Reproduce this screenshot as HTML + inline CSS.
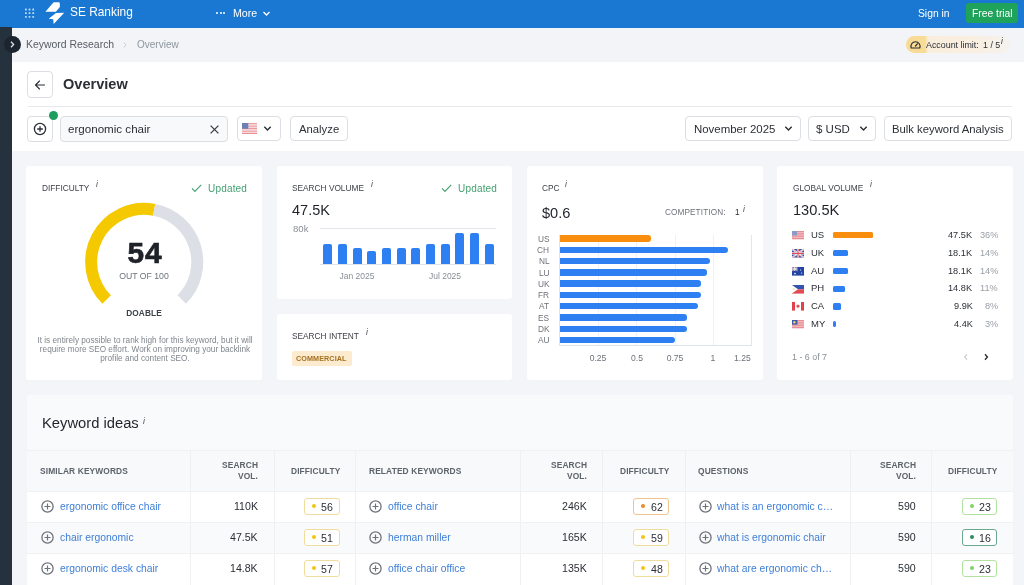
<!DOCTYPE html>
<html><head><meta charset="utf-8"><style>
html,body{margin:0;padding:0;}
body{width:1024px;height:585px;overflow:hidden;position:relative;background:#f3f5f8;font-family:"Liberation Sans",sans-serif;}
.a{position:absolute;}
.t{position:absolute;line-height:1;white-space:nowrap;will-change:transform;}
svg.a{overflow:visible}
</style></head><body>
<div class="a" style="left:0.00px;top:0.00px;width:1024.00px;height:27.70px;background:#1a78d2"></div>
<svg class="a" style="left:0;top:0" width="40" height="27" viewBox="0 0 40 27"><rect x="25.00" y="8.60" width="1.8" height="1.8" rx="0.4" fill="#c4dcf8"/><rect x="25.00" y="12.30" width="1.8" height="1.8" rx="0.4" fill="#c4dcf8"/><rect x="25.00" y="15.90" width="1.8" height="1.8" rx="0.4" fill="#c4dcf8"/><rect x="28.60" y="8.60" width="1.8" height="1.8" rx="0.4" fill="#c4dcf8"/><rect x="28.60" y="12.30" width="1.8" height="1.8" rx="0.4" fill="#c4dcf8"/><rect x="28.60" y="15.90" width="1.8" height="1.8" rx="0.4" fill="#c4dcf8"/><rect x="32.30" y="8.60" width="1.8" height="1.8" rx="0.4" fill="#c4dcf8"/><rect x="32.30" y="12.30" width="1.8" height="1.8" rx="0.4" fill="#c4dcf8"/><rect x="32.30" y="15.90" width="1.8" height="1.8" rx="0.4" fill="#c4dcf8"/></svg>
<svg class="a" style="left:0;top:0" width="80" height="27" viewBox="0 0 80 27"><path d="M45.4 11.7 L53.4 2.6 Q53.8 2.2 54.4 2.2 L58.6 2.2 Q59.8 2.2 59.8 3.4 L59.9 6.2 Q59.9 6.9 59.4 7.5 L55.9 11.7 Z" fill="#fff"/><path d="M48.8 18.8 L55.6 13.2 Q56 12.9 56.5 12.9 L64.2 12.8 L53.7 23.9 L53.2 19.3 Z" fill="#fff"/></svg>
<div class="t" style="top:7.43px;font-size:11.9px;color:#fff;left:70.40px;">SE Ranking</div>
<div class="a" style="left:216.00px;top:12.30px;width:2.00px;height:2.00px;background:#fff;border-radius:50%"></div>
<div class="a" style="left:219.60px;top:12.30px;width:2.00px;height:2.00px;background:#fff;border-radius:50%"></div>
<div class="a" style="left:223.20px;top:12.30px;width:2.00px;height:2.00px;background:#fff;border-radius:50%"></div>
<div class="t" style="top:7.93px;font-size:10.6px;color:#fff;left:232.50px;">More</div>
<svg class="a" style="left:262px;top:10px" width="9" height="7" viewBox="0 0 9 7"><path d="M1.5 2 L4.5 5 L7.5 2" stroke="#fff" stroke-width="1.3" fill="none"/></svg>
<div class="t" style="top:8.98px;font-size:10.3px;color:#fff;left:917.70px;">Sign in</div>
<div class="a" style="left:966.00px;top:3.30px;width:52.30px;height:20.10px;background:#1fa35b;border-radius:3px"></div>
<div class="t" style="top:9.18px;font-size:10.3px;color:#fff;left:972.40px;">Free trial</div>
<div class="a" style="left:0.00px;top:27.00px;width:12.00px;height:558.00px;background:#25313d"></div>
<div class="a" style="left:12.00px;top:27.70px;width:1012.00px;height:33.80px;background:#f2f4f8"></div>
<div class="t" style="top:39.95px;font-size:10.45px;color:#565c64;left:25.90px;">Keyword Research</div>
<svg class="a" style="left:122px;top:41px" width="6" height="8" viewBox="0 0 6 8"><path d="M1.8 1.5 L4 4 L1.8 6.5" stroke="#c5c9cf" stroke-width="0.9" fill="none"/></svg>
<div class="t" style="top:40.33px;font-size:10.0px;color:#90969e;left:137.40px;">Overview</div>
<div class="a" style="left:3.80px;top:36.00px;width:17.00px;height:17.00px;background:#1c252f;border-radius:50%"></div>
<svg class="a" style="left:8px;top:40px" width="9" height="9" viewBox="0 0 9 9"><path d="M3 1.8 L5.6 4.5 L3 7.2" stroke="#dfe3e8" stroke-width="1.3" fill="none"/></svg>
<div class="a" style="left:906.00px;top:36.30px;width:104.00px;height:17.20px;background:linear-gradient(90deg,#f8db94 0px,#f8db94 19px,#f9eedc 22px,#f9efe2 70px,#f5f2ee 100%);border-radius:9px"></div>
<svg class="a" style="left:909px;top:39px" width="13" height="12" viewBox="0 0 13 12"><path d="M2.2 9 A4.6 4.6 0 1 1 10.8 9 Z" stroke="#2b2f36" stroke-width="1.2" fill="none" stroke-linejoin="round"/><path d="M6.5 7 L8.4 4.8" stroke="#2b2f36" stroke-width="1.2" stroke-linecap="round"/></svg>
<div class="t" style="top:40.87px;font-size:8.9px;color:#2b2f36;left:926.30px;">Account limit:</div>
<div class="t" style="top:40.87px;font-size:8.9px;color:#2b2f36;left:982.80px;">1 / 5</div>
<div class="t" style="top:37.19px;font-size:8.4px;color:#2b2f36;left:1001.20px;"><i>i</i></div>
<div class="a" style="left:12.00px;top:61.50px;width:1012.00px;height:89.00px;background:#fff"></div>
<div class="a" style="left:27.00px;top:71.20px;width:25.50px;height:26.60px;background:#fff;border:1px solid #dbdee3;border-radius:4px;box-sizing:border-box"></div>
<svg class="a" style="left:33px;top:77.6px" width="14" height="14" viewBox="0 0 14 14"><path d="M11.5 7 H2.8 M6.5 3 L2.5 7 L6.5 11" stroke="#2b2f36" stroke-width="1.1" fill="none" stroke-linecap="round" stroke-linejoin="round"/></svg>
<div class="t" style="top:77.28px;font-size:14.55px;color:#2b2f36;font-weight:700;left:62.50px;">Overview</div>
<div class="a" style="left:28.00px;top:105.60px;width:984.00px;height:1.00px;background:#e6e8eb"></div>
<div class="a" style="left:27.30px;top:115.50px;width:25.30px;height:26.00px;background:#fff;border:1px solid #dbdee3;border-radius:4px;box-sizing:border-box"></div>
<svg class="a" style="left:33px;top:121.5px" width="14" height="14" viewBox="0 0 14 14"><circle cx="7" cy="7" r="5.6" stroke="#2b2f36" stroke-width="1.3" fill="none"/><path d="M7 4.2 V9.8 M4.2 7 H9.8" stroke="#2b2f36" stroke-width="1.3"/></svg>
<div class="a" style="left:48.90px;top:110.90px;width:9.20px;height:9.20px;background:#1c9f5e;border-radius:50%"></div>
<div class="a" style="left:59.50px;top:115.50px;width:168.00px;height:26.00px;background:#f8f9fa;border:1px solid #dbdee3;border-radius:4px;box-sizing:border-box"></div>
<div class="t" style="top:122.68px;font-size:11.6px;color:#2b2f36;left:68.20px;">ergonomic chair</div>
<svg class="a" style="left:208px;top:123px" width="13" height="13" viewBox="0 0 13 13"><path d="M2.6 2.6 L10.4 10.4 M10.4 2.6 L2.6 10.4" stroke="#3a3f46" stroke-width="1.3"/></svg>
<div class="a" style="left:237.10px;top:115.60px;width:43.50px;height:25.80px;background:#fff;border:1px solid #dbdee3;border-radius:4px;box-sizing:border-box"></div>
<svg class="a" style="left:242.4px;top:123.4px;opacity:1" width="15" height="10.8" viewBox="0 0 19 13" preserveAspectRatio="none"><rect x="0" y="0.00" width="19" height="1.00" fill="#e8737a"/><rect x="0" y="2.00" width="19" height="1.00" fill="#e8737a"/><rect x="0" y="4.00" width="19" height="1.00" fill="#e8737a"/><rect x="0" y="6.00" width="19" height="1.00" fill="#e8737a"/><rect x="0" y="8.00" width="19" height="1.00" fill="#e8737a"/><rect x="0" y="10.00" width="19" height="1.00" fill="#e8737a"/><rect x="0" y="12.00" width="19" height="1.00" fill="#e8737a"/><rect x="0" y="1" width="19" height="1" fill="#f7dcdc"/><rect x="0" y="1.00" width="19" height="1" fill="#f5d5d7"/><rect x="0" y="3.00" width="19" height="1" fill="#f5d5d7"/><rect x="0" y="5.00" width="19" height="1" fill="#f5d5d7"/><rect x="0" y="7.00" width="19" height="1" fill="#f5d5d7"/><rect x="0" y="9.00" width="19" height="1" fill="#f5d5d7"/><rect x="0" y="11.00" width="19" height="1" fill="#f5d5d7"/><rect x="0" y="0" width="8" height="7" fill="#6b7fb8"/></svg>
<svg class="a" style="left:263px;top:124.5px" width="9" height="7" viewBox="0 0 9 7"><path d="M1.3 1.8 L4.5 5 L7.7 1.8" stroke="#2b2f36" stroke-width="1.4" fill="none"/></svg>
<div class="a" style="left:290.30px;top:115.60px;width:57.70px;height:25.80px;background:#fff;border:1px solid #dbdee3;border-radius:4px;box-sizing:border-box"></div>
<div class="t" style="top:123.63px;font-size:11.3px;color:#2b2f36;left:298.60px;">Analyze</div>
<div class="a" style="left:684.90px;top:115.60px;width:116.60px;height:25.80px;background:#fff;border:1px solid #dbdee3;border-radius:4px;box-sizing:border-box"></div>
<div class="t" style="top:124.21px;font-size:11.45px;color:#2b2f36;left:693.50px;">November 2025</div>
<svg class="a" style="left:784px;top:124.5px" width="9" height="7" viewBox="0 0 9 7"><path d="M1.3 1.8 L4.5 5 L7.7 1.8" stroke="#2b2f36" stroke-width="1.4" fill="none"/></svg>
<div class="a" style="left:808.10px;top:115.60px;width:68.20px;height:25.80px;background:#fff;border:1px solid #dbdee3;border-radius:4px;box-sizing:border-box"></div>
<div class="t" style="top:124.17px;font-size:11.5px;color:#2b2f36;left:816.20px;">$ USD</div>
<svg class="a" style="left:859px;top:124.5px" width="9" height="7" viewBox="0 0 9 7"><path d="M1.3 1.8 L4.5 5 L7.7 1.8" stroke="#2b2f36" stroke-width="1.4" fill="none"/></svg>
<div class="a" style="left:883.60px;top:115.60px;width:128.70px;height:25.80px;background:#fff;border:1px solid #dbdee3;border-radius:4px;box-sizing:border-box"></div>
<div class="t" style="top:123.63px;font-size:11.3px;color:#2b2f36;left:891.90px;">Bulk keyword Analysis</div>
<div class="a" style="left:25.80px;top:165.70px;width:236.20px;height:214.10px;background:#fff;border-radius:3px"></div>
<div class="a" style="left:277.10px;top:165.70px;width:234.70px;height:133.80px;background:#fff;border-radius:3px"></div>
<div class="a" style="left:277.10px;top:313.90px;width:234.70px;height:65.90px;background:#fff;border-radius:3px"></div>
<div class="a" style="left:527.30px;top:165.70px;width:235.60px;height:214.10px;background:#fff;border-radius:3px"></div>
<div class="a" style="left:777.30px;top:165.70px;width:235.30px;height:214.10px;background:#fff;border-radius:3px"></div>
<div class="t" style="top:183.77px;font-size:8.3px;color:#3d4148;left:41.50px;">DIFFICULTY</div>
<div class="t" style="top:180.22px;font-size:8.6px;color:#4a4e55;left:96.40px;"><i>i</i></div>
<svg class="a" style="left:191px;top:183.9px" width="11" height="9" viewBox="0 0 11 9"><path d="M1 4.4 L3.9 7.4 L10.2 0.9" stroke="#44a070" stroke-width="1.1" fill="none"/></svg>
<div class="t" style="top:183.94px;font-size:10.0px;color:#44a070;letter-spacing:0.18px;left:207.60px;">Updated</div>
<svg class="a" style="left:0;top:0" width="262" height="380" viewBox="0 0 262 380"><path d="M106.65 299.55 A53.1 53.1 0 0 1 154.15 209.84" stroke="#f5c900" stroke-width="12" fill="none"/><path d="M154.15 209.84 A53.1 53.1 0 0 1 181.75 299.55" stroke="#dcdfe5" stroke-width="12" fill="none"/></svg>
<div class="t" style="top:238.37px;font-size:29.8px;color:#1f2329;font-weight:700;letter-spacing:1.0px;left:-155.40px;width:600px;text-align:center;-webkit-text-stroke:0.7px #1f2329;">54</div>
<div class="t" style="top:271.54px;font-size:8.7px;color:#6d727a;left:-155.80px;width:600px;text-align:center;">OUT OF 100</div>
<div class="t" style="top:308.57px;font-size:8.3px;color:#3d4148;font-weight:700;letter-spacing:0.1px;left:-155.80px;width:600px;text-align:center;">DOABLE</div>
<div class="t" style="top:337.04px;font-size:8.22px;color:#80868d;left:-155.40px;width:600px;text-align:center;">It is entirely possible to rank high for this keyword, but it will</div>
<div class="t" style="top:346.14px;font-size:8.22px;color:#80868d;left:-155.40px;width:600px;text-align:center;">require more SEO effort. Work on improving your backlink</div>
<div class="t" style="top:355.24px;font-size:8.22px;color:#80868d;left:-155.40px;width:600px;text-align:center;">profile and content SEO.</div>
<div class="t" style="top:183.87px;font-size:8.3px;color:#3d4148;left:291.70px;">SEARCH VOLUME</div>
<div class="t" style="top:180.22px;font-size:8.6px;color:#4a4e55;left:371.40px;"><i>i</i></div>
<svg class="a" style="left:441px;top:183.9px" width="11" height="9" viewBox="0 0 11 9"><path d="M1 4.4 L3.9 7.4 L10.2 0.9" stroke="#44a070" stroke-width="1.1" fill="none"/></svg>
<div class="t" style="top:183.94px;font-size:10.0px;color:#44a070;letter-spacing:0.18px;left:457.60px;">Updated</div>
<div class="t" style="top:203.23px;font-size:14.5px;color:#1f2329;left:291.80px;">47.5K</div>
<div class="t" style="top:224.47px;font-size:9.6px;color:#8a8f96;left:292.60px;">80k</div>
<div class="a" style="left:320.00px;top:228.30px;width:176.30px;height:0.80px;background:#e3e6ea"></div>
<div class="a" style="left:320.00px;top:264.20px;width:176.30px;height:0.80px;background:#dfe3ea"></div>
<div class="a" style="left:323.10px;top:244.30px;width:9.00px;height:20.10px;background:#2d7ff2;border-radius:2px 2px 0 0"></div>
<div class="a" style="left:337.80px;top:244.30px;width:9.00px;height:20.10px;background:#2d7ff2;border-radius:2px 2px 0 0"></div>
<div class="a" style="left:352.50px;top:248.00px;width:9.00px;height:16.40px;background:#2d7ff2;border-radius:2px 2px 0 0"></div>
<div class="a" style="left:367.20px;top:251.00px;width:9.00px;height:13.40px;background:#2d7ff2;border-radius:2px 2px 0 0"></div>
<div class="a" style="left:381.90px;top:248.00px;width:9.00px;height:16.40px;background:#2d7ff2;border-radius:2px 2px 0 0"></div>
<div class="a" style="left:396.60px;top:248.00px;width:9.00px;height:16.40px;background:#2d7ff2;border-radius:2px 2px 0 0"></div>
<div class="a" style="left:411.30px;top:248.00px;width:9.00px;height:16.40px;background:#2d7ff2;border-radius:2px 2px 0 0"></div>
<div class="a" style="left:426.00px;top:244.30px;width:9.00px;height:20.10px;background:#2d7ff2;border-radius:2px 2px 0 0"></div>
<div class="a" style="left:440.70px;top:244.30px;width:9.00px;height:20.10px;background:#2d7ff2;border-radius:2px 2px 0 0"></div>
<div class="a" style="left:455.40px;top:233.20px;width:9.00px;height:31.20px;background:#2d7ff2;border-radius:2px 2px 0 0"></div>
<div class="a" style="left:470.10px;top:233.20px;width:9.00px;height:31.20px;background:#2d7ff2;border-radius:2px 2px 0 0"></div>
<div class="a" style="left:484.80px;top:244.30px;width:9.00px;height:20.10px;background:#2d7ff2;border-radius:2px 2px 0 0"></div>
<div class="t" style="top:271.90px;font-size:8.5px;color:#8a8f96;left:57.40px;width:600px;text-align:center;">Jan 2025</div>
<div class="t" style="top:271.90px;font-size:8.5px;color:#8a8f96;left:144.90px;width:600px;text-align:center;">Jul 2025</div>
<div class="t" style="top:331.97px;font-size:8.3px;color:#3d4148;left:291.70px;">SEARCH INTENT</div>
<div class="t" style="top:328.22px;font-size:8.6px;color:#4a4e55;left:365.90px;"><i>i</i></div>
<div class="a" style="left:292.00px;top:351.30px;width:59.80px;height:14.30px;background:#fdebcf;border-radius:2px"></div>
<div class="t" style="top:355.31px;font-size:7.2px;color:#a4701f;font-weight:700;letter-spacing:0.1px;left:296.40px;">COMMERCIAL</div>
<div class="t" style="top:183.87px;font-size:8.3px;color:#3d4148;left:541.60px;">CPC</div>
<div class="t" style="top:180.22px;font-size:8.6px;color:#4a4e55;left:565.40px;"><i>i</i></div>
<div class="t" style="top:205.84px;font-size:14.6px;color:#1f2329;left:542.00px;">$0.6</div>
<div class="t" style="top:208.76px;font-size:8.2px;color:#6d727a;letter-spacing:0.12px;left:664.90px;">COMPETITION:</div>
<div class="t" style="top:208.47px;font-size:8.3px;color:#2b2f36;left:734.50px;">1</div>
<div class="t" style="top:204.72px;font-size:8.6px;color:#4a4e55;left:743.20px;"><i>i</i></div>
<div class="a" style="left:597.96px;top:234.50px;width:0.80px;height:111.00px;background:#f0f1f4"></div>
<div class="a" style="left:636.32px;top:234.50px;width:0.80px;height:111.00px;background:#f0f1f4"></div>
<div class="a" style="left:674.68px;top:234.50px;width:0.80px;height:111.00px;background:#f0f1f4"></div>
<div class="a" style="left:713.04px;top:234.50px;width:0.80px;height:111.00px;background:#f0f1f4"></div>
<div class="a" style="left:751.00px;top:234.50px;width:0.80px;height:111.00px;background:#e3e6ea"></div>
<div class="a" style="left:558.80px;top:234.50px;width:0.80px;height:111.50px;background:#dfe3ea"></div>
<div class="a" style="left:559.60px;top:345.20px;width:192.00px;height:0.80px;background:#dfe3ea"></div>
<div class="a" style="left:559.60px;top:235.20px;width:90.99px;height:6.40px;background:#f98d0e;border-radius:0 3px 3px 0"></div>
<div class="t" style="top:234.57px;font-size:8.3px;color:#6d727a;right:474.70px;">US</div>
<div class="a" style="left:559.60px;top:246.51px;width:168.78px;height:6.40px;background:#2d7ff2;border-radius:0 3px 3px 0"></div>
<div class="t" style="top:245.88px;font-size:8.3px;color:#6d727a;right:474.70px;">CH</div>
<div class="a" style="left:559.60px;top:257.82px;width:150.37px;height:6.40px;background:#2d7ff2;border-radius:0 3px 3px 0"></div>
<div class="t" style="top:257.19px;font-size:8.3px;color:#6d727a;right:474.70px;">NL</div>
<div class="a" style="left:559.60px;top:269.13px;width:147.30px;height:6.40px;background:#2d7ff2;border-radius:0 3px 3px 0"></div>
<div class="t" style="top:268.50px;font-size:8.3px;color:#6d727a;right:474.70px;">LU</div>
<div class="a" style="left:559.60px;top:280.44px;width:141.47px;height:6.40px;background:#2d7ff2;border-radius:0 3px 3px 0"></div>
<div class="t" style="top:279.81px;font-size:8.3px;color:#6d727a;right:474.70px;">UK</div>
<div class="a" style="left:559.60px;top:291.75px;width:141.47px;height:6.40px;background:#2d7ff2;border-radius:0 3px 3px 0"></div>
<div class="t" style="top:291.12px;font-size:8.3px;color:#6d727a;right:474.70px;">FR</div>
<div class="a" style="left:559.60px;top:303.06px;width:138.86px;height:6.40px;background:#2d7ff2;border-radius:0 3px 3px 0"></div>
<div class="t" style="top:302.43px;font-size:8.3px;color:#6d727a;right:474.70px;">AT</div>
<div class="a" style="left:559.60px;top:314.37px;width:127.66px;height:6.40px;background:#2d7ff2;border-radius:0 3px 3px 0"></div>
<div class="t" style="top:313.74px;font-size:8.3px;color:#6d727a;right:474.70px;">ES</div>
<div class="a" style="left:559.60px;top:325.68px;width:127.66px;height:6.40px;background:#2d7ff2;border-radius:0 3px 3px 0"></div>
<div class="t" style="top:325.05px;font-size:8.3px;color:#6d727a;right:474.70px;">DK</div>
<div class="a" style="left:559.60px;top:336.99px;width:115.54px;height:6.40px;background:#2d7ff2;border-radius:0 3px 3px 0"></div>
<div class="t" style="top:336.36px;font-size:8.3px;color:#6d727a;right:474.70px;">AU</div>
<div class="t" style="top:353.62px;font-size:8.6px;color:#6d727a;left:298.16px;width:600px;text-align:center;">0.25</div>
<div class="t" style="top:353.62px;font-size:8.6px;color:#6d727a;left:336.52px;width:600px;text-align:center;">0.5</div>
<div class="t" style="top:353.62px;font-size:8.6px;color:#6d727a;left:374.88px;width:600px;text-align:center;">0.75</div>
<div class="t" style="top:353.62px;font-size:8.6px;color:#6d727a;left:413.24px;width:600px;text-align:center;">1</div>
<div class="t" style="top:353.62px;font-size:8.6px;color:#6d727a;right:273.70px;">1.25</div>
<div class="t" style="top:183.87px;font-size:8.3px;color:#3d4148;left:792.50px;">GLOBAL VOLUME</div>
<div class="t" style="top:180.22px;font-size:8.6px;color:#4a4e55;left:869.90px;"><i>i</i></div>
<div class="t" style="top:203.14px;font-size:14.6px;color:#1f2329;left:792.80px;">130.5K</div>
<svg class="a" style="left:792.3px;top:231.10px" width="12" height="8.6" viewBox="0 0 12 8.6"><rect width="12" height="8.6" rx="0.8" fill="#f1bcc1"/><rect y="0.00" width="12" height="1.1" fill="#e88b93"/><rect y="2.30" width="12" height="1.1" fill="#e88b93"/><rect y="4.60" width="12" height="1.1" fill="#e88b93"/><rect y="6.90" width="12" height="1.1" fill="#e88b93"/><rect width="5" height="4.4" fill="#8b9bc9"/></svg>
<div class="t" style="top:229.96px;font-size:9.5px;color:#2b2f36;left:811.40px;">US</div>
<div class="a" style="left:832.90px;top:232.00px;width:39.80px;height:6.30px;background:#f98d0e;border-radius:1.5px"></div>
<div class="t" style="top:230.91px;font-size:9.2px;color:#2b2f36;right:51.60px;">47.5K</div>
<div class="t" style="top:230.91px;font-size:9.2px;color:#9aa0a7;right:26.00px;">36%</div>
<svg class="a" style="left:792.3px;top:248.94px" width="12" height="8.6" viewBox="0 0 12 8.6"><rect width="12" height="8.6" fill="#3653a8"/><path d="M0 0 L12 8.6 M12 0 L0 8.6" stroke="#fff" stroke-width="1.6"/><path d="M0 0 L12 8.6 M12 0 L0 8.6" stroke="#d9505c" stroke-width="0.5"/><path d="M6 0 V8.6 M0 4.3 H12" stroke="#fff" stroke-width="2.2"/><path d="M6 0 V8.6 M0 4.3 H12" stroke="#d9505c" stroke-width="1.2"/></svg>
<div class="t" style="top:247.80px;font-size:9.5px;color:#2b2f36;left:811.40px;">UK</div>
<div class="a" style="left:832.90px;top:249.84px;width:15.20px;height:6.30px;background:#2d7ff2;border-radius:1.5px"></div>
<div class="t" style="top:248.75px;font-size:9.2px;color:#2b2f36;right:51.60px;">18.1K</div>
<div class="t" style="top:248.75px;font-size:9.2px;color:#9aa0a7;right:26.00px;">14%</div>
<svg class="a" style="left:792.3px;top:266.78px" width="12" height="8.6" viewBox="0 0 12 8.6"><rect width="12" height="8.6" fill="#2344a3"/><rect width="5.5" height="4" fill="#5a6fb5"/><path d="M0 0 L5.5 4 M5.5 0 L0 4" stroke="#f0b0b8" stroke-width="0.8"/><path d="M2.75 0 V4 M0 2 H5.5" stroke="#f5f0f2" stroke-width="1"/><circle cx="8.6" cy="3" r="0.6" fill="#fff"/><circle cx="9.6" cy="6" r="0.6" fill="#fff"/><circle cx="3" cy="6.6" r="0.8" fill="#fff"/></svg>
<div class="t" style="top:265.64px;font-size:9.5px;color:#2b2f36;left:811.40px;">AU</div>
<div class="a" style="left:832.90px;top:267.68px;width:15.20px;height:6.30px;background:#2d7ff2;border-radius:1.5px"></div>
<div class="t" style="top:266.59px;font-size:9.2px;color:#2b2f36;right:51.60px;">18.1K</div>
<div class="t" style="top:266.59px;font-size:9.2px;color:#9aa0a7;right:26.00px;">14%</div>
<svg class="a" style="left:792.3px;top:284.62px" width="12" height="8.6" viewBox="0 0 12 8.6"><rect width="12" height="4.3" fill="#3354b0"/><rect y="4.3" width="12" height="4.3" fill="#e24a55"/><path d="M0 0 L6 4.3 L0 8.6 Z" fill="#fff"/><circle cx="2" cy="4.3" r="0.8" fill="#f2d070"/></svg>
<div class="t" style="top:283.48px;font-size:9.5px;color:#2b2f36;left:811.40px;">PH</div>
<div class="a" style="left:832.90px;top:285.52px;width:12.30px;height:6.30px;background:#2d7ff2;border-radius:1.5px"></div>
<div class="t" style="top:284.43px;font-size:9.2px;color:#2b2f36;right:51.60px;">14.8K</div>
<div class="t" style="top:284.43px;font-size:9.2px;color:#9aa0a7;right:26.00px;">11%</div>
<svg class="a" style="left:792.3px;top:302.46px" width="12" height="8.6" viewBox="0 0 12 8.6"><rect width="12" height="8.6" fill="#fff"/><rect width="3" height="8.6" fill="#e2414a"/><rect x="9" width="3" height="8.6" fill="#e2414a"/><path d="M6 2 L6.8 3.6 L7.8 3.2 L7.3 5.3 L6.2 5.6 V6.6 H5.8 V5.6 L4.7 5.3 L4.2 3.2 L5.2 3.6 Z" fill="#e2414a"/></svg>
<div class="t" style="top:301.32px;font-size:9.5px;color:#2b2f36;left:811.40px;">CA</div>
<div class="a" style="left:832.90px;top:303.36px;width:8.20px;height:6.30px;background:#2d7ff2;border-radius:1.5px"></div>
<div class="t" style="top:302.27px;font-size:9.2px;color:#2b2f36;right:51.60px;">9.9K</div>
<div class="t" style="top:302.27px;font-size:9.2px;color:#9aa0a7;right:26.00px;">8%</div>
<svg class="a" style="left:792.3px;top:320.30px" width="12" height="8.6" viewBox="0 0 12 8.6"><rect width="12" height="8.6" rx="0.8" fill="#f1bcc1"/><rect y="0.00" width="12" height="1.1" fill="#e88b93"/><rect y="2.30" width="12" height="1.1" fill="#e88b93"/><rect y="4.60" width="12" height="1.1" fill="#e88b93"/><rect y="6.90" width="12" height="1.1" fill="#e88b93"/><rect width="5.4" height="4.6" fill="#3d5aa6"/><circle cx="2.4" cy="2.3" r="1.2" fill="#e9d27a"/></svg>
<div class="t" style="top:319.16px;font-size:9.5px;color:#2b2f36;left:811.40px;">MY</div>
<div class="a" style="left:832.90px;top:321.20px;width:3.50px;height:6.30px;background:#2d7ff2;border-radius:1.5px"></div>
<div class="t" style="top:320.11px;font-size:9.2px;color:#2b2f36;right:51.60px;">4.4K</div>
<div class="t" style="top:320.11px;font-size:9.2px;color:#9aa0a7;right:26.00px;">3%</div>
<div class="t" style="top:352.77px;font-size:8.9px;color:#8a8f96;left:792.30px;">1 - 6 of 7</div>
<svg class="a" style="left:961px;top:352px" width="10" height="10" viewBox="0 0 10 10"><path d="M6 2.3 L3.6 5 L6 7.7" stroke="#c9cdd2" stroke-width="1.2" fill="none"/></svg>
<svg class="a" style="left:980.7px;top:352px" width="10" height="10" viewBox="0 0 10 10"><path d="M4 2.3 L6.4 5 L4 7.7" stroke="#2b2f36" stroke-width="1.4" fill="none"/></svg>
<div class="a" style="left:26.80px;top:395.40px;width:986.00px;height:200.00px;background:#f9fafb;border-radius:3px"></div>
<div class="t" style="top:415.91px;font-size:14.75px;color:#1f2329;left:41.60px;">Keyword ideas</div>
<div class="t" style="top:416.92px;font-size:8.6px;color:#4a4e55;left:143.20px;"><i>i</i></div>
<div class="a" style="left:27.00px;top:450.50px;width:986.00px;height:40.30px;background:#f8f9fa"></div>
<div class="a" style="left:27.00px;top:490.80px;width:986.00px;height:31.00px;background:#fff"></div>
<div class="a" style="left:27.00px;top:521.80px;width:986.00px;height:31.00px;background:#f9fafb"></div>
<div class="a" style="left:27.00px;top:552.80px;width:986.00px;height:33.00px;background:#fff"></div>
<div class="a" style="left:190.40px;top:450.50px;width:0.80px;height:140.00px;background:#eef0f2"></div>
<div class="a" style="left:273.60px;top:450.50px;width:0.80px;height:140.00px;background:#eef0f2"></div>
<div class="a" style="left:355.40px;top:450.50px;width:0.80px;height:140.00px;background:#eef0f2"></div>
<div class="a" style="left:520.40px;top:450.50px;width:0.80px;height:140.00px;background:#eef0f2"></div>
<div class="a" style="left:602.20px;top:450.50px;width:0.80px;height:140.00px;background:#eef0f2"></div>
<div class="a" style="left:684.70px;top:450.50px;width:0.80px;height:140.00px;background:#eef0f2"></div>
<div class="a" style="left:849.70px;top:450.50px;width:0.80px;height:140.00px;background:#eef0f2"></div>
<div class="a" style="left:931.10px;top:450.50px;width:0.80px;height:140.00px;background:#eef0f2"></div>
<div class="a" style="left:27.00px;top:450.30px;width:986.00px;height:0.80px;background:#f0f1f3"></div>
<div class="a" style="left:27.00px;top:490.60px;width:986.00px;height:0.80px;background:#f0f1f3"></div>
<div class="a" style="left:27.00px;top:521.60px;width:986.00px;height:0.80px;background:#f0f1f3"></div>
<div class="a" style="left:27.00px;top:552.60px;width:986.00px;height:0.80px;background:#f0f1f3"></div>
<div class="t" style="top:466.89px;font-size:8.4px;color:#5d636b;font-weight:700;letter-spacing:0.12px;left:40.40px;">SIMILAR KEYWORDS</div>
<div class="t" style="top:460.59px;font-size:8.4px;color:#5d636b;font-weight:700;letter-spacing:0.12px;right:765.60px;">SEARCH</div>
<div class="t" style="top:472.49px;font-size:8.4px;color:#5d636b;font-weight:700;letter-spacing:0.12px;right:765.60px;">VOL.</div>
<div class="t" style="top:466.89px;font-size:8.4px;color:#5d636b;font-weight:700;letter-spacing:0.12px;right:683.80px;">DIFFICULTY</div>
<svg class="a" style="left:41.00px;top:499.90px" width="13" height="13" viewBox="0 0 13 13"><circle cx="6.5" cy="6.5" r="5.6" stroke="#6e737a" stroke-width="1.3" fill="none"/><path d="M6.5 3.5 V9.5 M3.5 6.5 H9.5" stroke="#6e737a" stroke-width="1.2"/></svg>
<div class="t" style="top:501.74px;font-size:10.35px;color:#3f7fd7;left:59.50px;">ergonomic office chair</div>
<div class="t" style="top:501.13px;font-size:10.6px;color:#2b2f36;right:766.00px;">110K</div>
<div class="a" style="left:304.00px;top:497.60px;width:35.60px;height:17.80px;background:#fff;border:1px solid #f0dc9c;border-radius:3px;box-sizing:border-box"></div>
<div class="a" style="left:312.00px;top:504.30px;width:4.20px;height:4.20px;background:#f4c414;border-radius:50%"></div>
<div class="t" style="top:501.53px;font-size:10.6px;color:#2b2f36;right:690.90px;">56</div>
<svg class="a" style="left:41.00px;top:530.90px" width="13" height="13" viewBox="0 0 13 13"><circle cx="6.5" cy="6.5" r="5.6" stroke="#6e737a" stroke-width="1.3" fill="none"/><path d="M6.5 3.5 V9.5 M3.5 6.5 H9.5" stroke="#6e737a" stroke-width="1.2"/></svg>
<div class="t" style="top:532.74px;font-size:10.35px;color:#3f7fd7;left:59.50px;">chair ergonomic</div>
<div class="t" style="top:532.13px;font-size:10.6px;color:#2b2f36;right:766.00px;">47.5K</div>
<div class="a" style="left:304.00px;top:528.60px;width:35.60px;height:17.80px;background:#fff;border:1px solid #f0dc9c;border-radius:3px;box-sizing:border-box"></div>
<div class="a" style="left:312.00px;top:535.30px;width:4.20px;height:4.20px;background:#f4c414;border-radius:50%"></div>
<div class="t" style="top:532.53px;font-size:10.6px;color:#2b2f36;right:690.90px;">51</div>
<svg class="a" style="left:41.00px;top:561.90px" width="13" height="13" viewBox="0 0 13 13"><circle cx="6.5" cy="6.5" r="5.6" stroke="#6e737a" stroke-width="1.3" fill="none"/><path d="M6.5 3.5 V9.5 M3.5 6.5 H9.5" stroke="#6e737a" stroke-width="1.2"/></svg>
<div class="t" style="top:563.74px;font-size:10.35px;color:#3f7fd7;left:59.50px;">ergonomic desk chair</div>
<div class="t" style="top:563.13px;font-size:10.6px;color:#2b2f36;right:766.00px;">14.8K</div>
<div class="a" style="left:304.00px;top:559.60px;width:35.60px;height:17.80px;background:#fff;border:1px solid #f0dc9c;border-radius:3px;box-sizing:border-box"></div>
<div class="a" style="left:312.00px;top:566.30px;width:4.20px;height:4.20px;background:#f4c414;border-radius:50%"></div>
<div class="t" style="top:563.53px;font-size:10.6px;color:#2b2f36;right:690.90px;">57</div>
<div class="t" style="top:466.89px;font-size:8.4px;color:#5d636b;font-weight:700;letter-spacing:0.12px;left:368.80px;">RELATED KEYWORDS</div>
<div class="t" style="top:460.59px;font-size:8.4px;color:#5d636b;font-weight:700;letter-spacing:0.12px;right:437.00px;">SEARCH</div>
<div class="t" style="top:472.49px;font-size:8.4px;color:#5d636b;font-weight:700;letter-spacing:0.12px;right:437.00px;">VOL.</div>
<div class="t" style="top:466.89px;font-size:8.4px;color:#5d636b;font-weight:700;letter-spacing:0.12px;right:354.50px;">DIFFICULTY</div>
<svg class="a" style="left:369.40px;top:499.90px" width="13" height="13" viewBox="0 0 13 13"><circle cx="6.5" cy="6.5" r="5.6" stroke="#6e737a" stroke-width="1.3" fill="none"/><path d="M6.5 3.5 V9.5 M3.5 6.5 H9.5" stroke="#6e737a" stroke-width="1.2"/></svg>
<div class="t" style="top:501.74px;font-size:10.35px;color:#3f7fd7;left:387.90px;">office chair</div>
<div class="t" style="top:501.13px;font-size:10.6px;color:#2b2f36;right:437.40px;">246K</div>
<div class="a" style="left:633.30px;top:497.60px;width:35.60px;height:17.80px;background:#fff;border:1px solid #f0c48e;border-radius:3px;box-sizing:border-box"></div>
<div class="a" style="left:641.30px;top:504.30px;width:4.20px;height:4.20px;background:#ee8a26;border-radius:50%"></div>
<div class="t" style="top:501.53px;font-size:10.6px;color:#2b2f36;right:361.60px;">62</div>
<svg class="a" style="left:369.40px;top:530.90px" width="13" height="13" viewBox="0 0 13 13"><circle cx="6.5" cy="6.5" r="5.6" stroke="#6e737a" stroke-width="1.3" fill="none"/><path d="M6.5 3.5 V9.5 M3.5 6.5 H9.5" stroke="#6e737a" stroke-width="1.2"/></svg>
<div class="t" style="top:532.74px;font-size:10.35px;color:#3f7fd7;left:387.90px;">herman miller</div>
<div class="t" style="top:532.13px;font-size:10.6px;color:#2b2f36;right:437.40px;">165K</div>
<div class="a" style="left:633.30px;top:528.60px;width:35.60px;height:17.80px;background:#fff;border:1px solid #f0dc9c;border-radius:3px;box-sizing:border-box"></div>
<div class="a" style="left:641.30px;top:535.30px;width:4.20px;height:4.20px;background:#f4c414;border-radius:50%"></div>
<div class="t" style="top:532.53px;font-size:10.6px;color:#2b2f36;right:361.60px;">59</div>
<svg class="a" style="left:369.40px;top:561.90px" width="13" height="13" viewBox="0 0 13 13"><circle cx="6.5" cy="6.5" r="5.6" stroke="#6e737a" stroke-width="1.3" fill="none"/><path d="M6.5 3.5 V9.5 M3.5 6.5 H9.5" stroke="#6e737a" stroke-width="1.2"/></svg>
<div class="t" style="top:563.74px;font-size:10.35px;color:#3f7fd7;left:387.90px;">office chair office</div>
<div class="t" style="top:563.13px;font-size:10.6px;color:#2b2f36;right:437.40px;">135K</div>
<div class="a" style="left:633.30px;top:559.60px;width:35.60px;height:17.80px;background:#fff;border:1px solid #f0dc9c;border-radius:3px;box-sizing:border-box"></div>
<div class="a" style="left:641.30px;top:566.30px;width:4.20px;height:4.20px;background:#f4c414;border-radius:50%"></div>
<div class="t" style="top:563.53px;font-size:10.6px;color:#2b2f36;right:361.60px;">48</div>
<div class="t" style="top:466.89px;font-size:8.4px;color:#5d636b;font-weight:700;letter-spacing:0.12px;left:698.10px;">QUESTIONS</div>
<div class="t" style="top:460.59px;font-size:8.4px;color:#5d636b;font-weight:700;letter-spacing:0.12px;right:108.10px;">SEARCH</div>
<div class="t" style="top:472.49px;font-size:8.4px;color:#5d636b;font-weight:700;letter-spacing:0.12px;right:108.10px;">VOL.</div>
<div class="t" style="top:466.89px;font-size:8.4px;color:#5d636b;font-weight:700;letter-spacing:0.12px;right:26.20px;">DIFFICULTY</div>
<svg class="a" style="left:698.70px;top:499.90px" width="13" height="13" viewBox="0 0 13 13"><circle cx="6.5" cy="6.5" r="5.6" stroke="#6e737a" stroke-width="1.3" fill="none"/><path d="M6.5 3.5 V9.5 M3.5 6.5 H9.5" stroke="#6e737a" stroke-width="1.2"/></svg>
<div class="t" style="top:501.74px;font-size:10.35px;color:#3f7fd7;left:717.20px;">what is an ergonomic c…</div>
<div class="t" style="top:501.13px;font-size:10.6px;color:#2b2f36;right:108.50px;">590</div>
<div class="a" style="left:961.60px;top:497.60px;width:35.60px;height:17.80px;background:#fff;border:1px solid #b2e2a0;border-radius:3px;box-sizing:border-box"></div>
<div class="a" style="left:969.60px;top:504.30px;width:4.20px;height:4.20px;background:#82d16a;border-radius:50%"></div>
<div class="t" style="top:501.53px;font-size:10.6px;color:#2b2f36;right:33.30px;">23</div>
<svg class="a" style="left:698.70px;top:530.90px" width="13" height="13" viewBox="0 0 13 13"><circle cx="6.5" cy="6.5" r="5.6" stroke="#6e737a" stroke-width="1.3" fill="none"/><path d="M6.5 3.5 V9.5 M3.5 6.5 H9.5" stroke="#6e737a" stroke-width="1.2"/></svg>
<div class="t" style="top:532.74px;font-size:10.35px;color:#3f7fd7;left:717.20px;">what is ergonomic chair</div>
<div class="t" style="top:532.13px;font-size:10.6px;color:#2b2f36;right:108.50px;">590</div>
<div class="a" style="left:961.60px;top:528.60px;width:35.60px;height:17.80px;background:#fff;border:1px solid #6aa98f;border-radius:3px;box-sizing:border-box"></div>
<div class="a" style="left:969.60px;top:535.30px;width:4.20px;height:4.20px;background:#2f8c62;border-radius:50%"></div>
<div class="t" style="top:532.53px;font-size:10.6px;color:#2b2f36;right:33.30px;">16</div>
<svg class="a" style="left:698.70px;top:561.90px" width="13" height="13" viewBox="0 0 13 13"><circle cx="6.5" cy="6.5" r="5.6" stroke="#6e737a" stroke-width="1.3" fill="none"/><path d="M6.5 3.5 V9.5 M3.5 6.5 H9.5" stroke="#6e737a" stroke-width="1.2"/></svg>
<div class="t" style="top:563.74px;font-size:10.35px;color:#3f7fd7;left:717.20px;">what are ergonomic ch…</div>
<div class="t" style="top:563.13px;font-size:10.6px;color:#2b2f36;right:108.50px;">590</div>
<div class="a" style="left:961.60px;top:559.60px;width:35.60px;height:17.80px;background:#fff;border:1px solid #b2e2a0;border-radius:3px;box-sizing:border-box"></div>
<div class="a" style="left:969.60px;top:566.30px;width:4.20px;height:4.20px;background:#82d16a;border-radius:50%"></div>
<div class="t" style="top:563.53px;font-size:10.6px;color:#2b2f36;right:33.30px;">23</div>
</body></html>
